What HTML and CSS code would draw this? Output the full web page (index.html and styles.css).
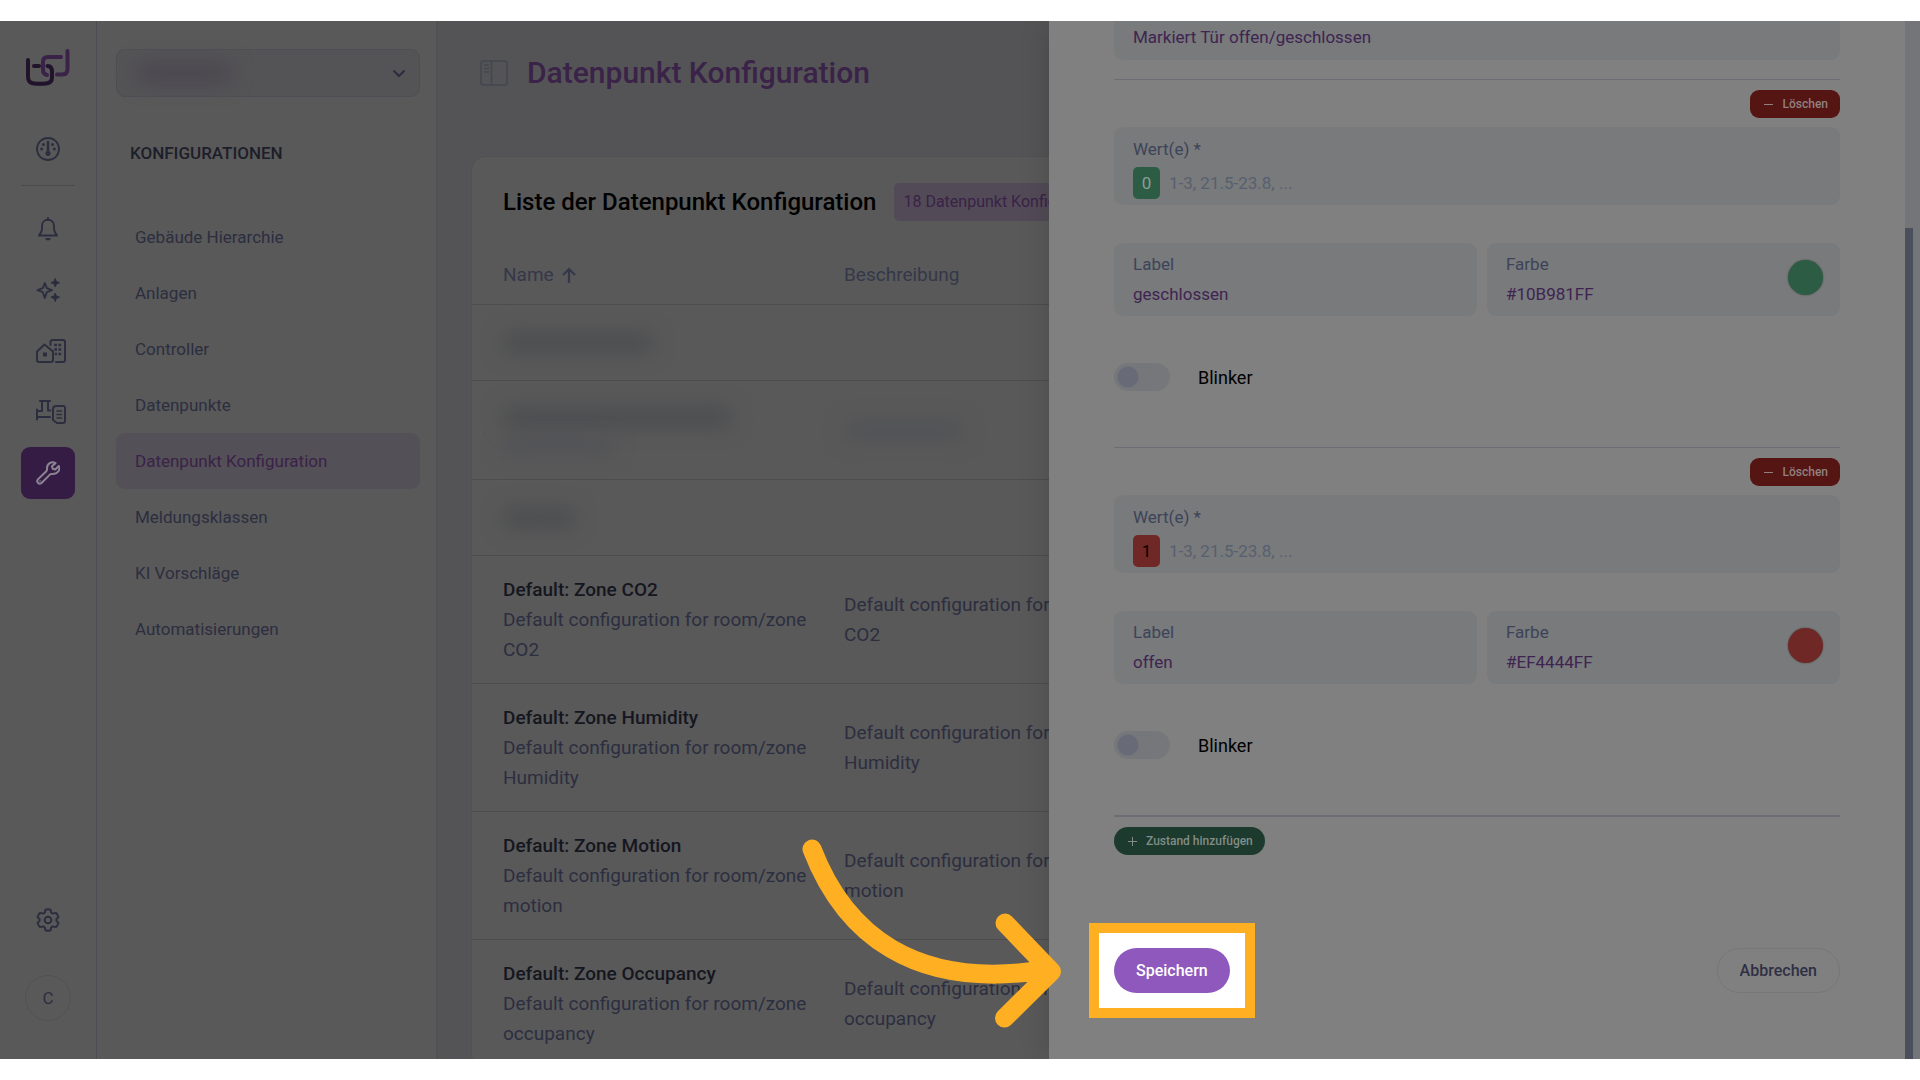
FILE: index.html
```
<!DOCTYPE html>
<html lang="de">
<head>
  <meta charset="UTF-8">
  <meta name="viewport" content="width=device-width, initial-scale=1.0">
  <title>Datenpunkt Konfiguration</title>
  <link rel="stylesheet" href="styles.css">
</head>
<body>
  <div class="app">

    <!-- Icon rail -->
    <nav class="rail" aria-label="Hauptmenü">
      <a class="logo" href="#" aria-label="Startseite">
        <svg width="44" height="37" viewBox="0 0 44 37" fill="none" stroke-width="4" stroke-linecap="round">
          <path class="logo-light" d="M35 8H22q-5 0-5 5v8q0 4 4 5M31 25.500h5q5.500 0 5.500-5.500V2"/>
          <path class="logo-dark" d="M2 11v17q0 6 6 6.500q6 .500 12 0q6-.500 6-6V23q0-6-4.500-6M8 17h5"/>
        </svg>
      </a>
      <a class="rail-item" href="#" aria-label="Dashboard">
        <svg width="24" height="24" viewBox="0 0 24 24" fill="none" stroke="currentColor" stroke-width="1.800">
          <circle cx="12" cy="12" r="11"/>
          <path d="M12 5v10" stroke-width="2.500" stroke-linecap="round"/>
          <g fill="currentColor" stroke="none">
            <circle cx="12" cy="16.500" r="2.500"/>
            <circle cx="7.500" cy="7.500" r="1.500"/>
            <circle cx="16.500" cy="7.500" r="1.500"/>
            <circle cx="5.600" cy="12" r="1.500"/>
            <circle cx="18.400" cy="12" r="1.500"/>
          </g>
        </svg>
      </a>
      <hr class="rail-line">
      <a class="rail-item" href="#" aria-label="Meldungen">
        <svg width="24" height="24" viewBox="0 0 24 24" fill="none" stroke="currentColor" stroke-width="1.900" stroke-linejoin="round" stroke-linecap="round">
          <path d="M12 1v2M12 2.800c-3.800 0-6 2.800-6 6v3.200c0 2.600-1.200 4-3 6.500h18c-1.800-2.500-3-3.900-3-6.500V8.800c0-3.200-2.200-6-6-6z"/>
          <path d="M9 21h6q-1 2.500-3 2.500t-3-2.500z" fill="currentColor" stroke="none"/>
        </svg>
      </a>
      <a class="rail-item" href="#" aria-label="KI">
        <svg width="24" height="24" viewBox="0 0 24 24" fill="none" stroke="currentColor" stroke-width="1.900" stroke-linejoin="round">
          <path d="M8.800 5l2 5.200 5.200 2-5.200 2-2 5.800-2-5.800-5.300-2 5.300-2z"/>
          <path d="M19.200.500l1.200 3 3.100 1.200-3.100 1.200-1.200 3-1.200-3-3.100-1.200 3.100-1.200zM19.200 15l1.200 3 3.100 1.200-3.100 1.200-1.200 3-1.200-3-3.100-1.200 3.100-1.200z" fill="currentColor" stroke-width="1"/>
        </svg>
      </a>
      <a class="rail-item wide" href="#" aria-label="Gebäude">
        <svg width="30" height="24" viewBox="0 0 30 24" fill="none" stroke="currentColor" stroke-width="2" stroke-linejoin="round" stroke-linecap="round">
          <path d="M1 12.500L8.500 5.500 17 12.500V21q0 2-2 2H3q-2 0-2-2z"/>
          <path d="M14.500 6V3q0-2 2-2H27q2 0 2 2v18q0 2-2 2h-7"/>
          <path d="M7 13.500h4v4H7zM18.200 4.700H21v2.600h-2.800zM22.400 4.700h2.800v2.600h-2.800zM18.200 9.200H21v2.600h-2.800zM22.400 9.200h2.800v2.600h-2.800zM18.800 13.700H21v2.600h-2.200zM22.400 13.700h2.800v2.600h-2.800z" fill="currentColor" stroke="none"/>
        </svg>
      </a>
      <a class="rail-item wide" href="#" aria-label="Anlagen">
        <svg width="30" height="24" viewBox="0 0 30 24" fill="none" stroke="currentColor" stroke-width="2" stroke-linejoin="round" stroke-linecap="round">
          <path d="M4 1h10M6 1v10H1M12 1v9.500h2.500M1 9.500v10M1 17h13"/>
          <path d="M20.500 6H27q2 0 2 2v13q0 2-2 2h-6l-4-3V9q0-3 3.500-3z"/>
          <path d="M21 11h4.500M21 14.500h4.500M21 18h4.500" stroke-width="1.500"/>
        </svg>
      </a>
      <a class="rail-item active" href="#" aria-label="Konfigurationen">
        <svg width="24" height="24" viewBox="0 0 24 24" fill="none" stroke="currentColor" stroke-width="2" stroke-linejoin="round" stroke-linecap="round">
          <path d="M19.500 2.200C16 .200 10.500 2 11 8.500q0 1-.700 1.700L1.900 18.400c-2 2.200 1 5.600 3.600 3.600l8.400-8.400q.700-.600 1.700-.600C22 13.500 24.500 8.500 22.800 5l-3.600 3.500-2.500-.700-.800-2.500z"/>
          <path d="M4 20h.100" stroke-width="1.500"/>
        </svg>
      </a>
      <div class="rail-bottom">
        <a class="rail-item" href="#" aria-label="Einstellungen">
          <svg width="24" height="24" viewBox="0 0 24 24" fill="none" stroke="currentColor" stroke-width="2" stroke-linejoin="round">
            <circle cx="12" cy="12" r="3.300"/>
            <path d="M9.500 1.800q2.500-1 5 0l.800 2.900 1.600.900 2.900-.700q2 1.600 2.600 4.200l-2 2.100v1.600l2 2.100q-.600 2.600-2.600 4.200l-2.900-.700-1.600.900-.800 2.900q-2.500 1-5 0l-.800-2.900-1.600-.900-2.900.700q-2-1.600-2.600-4.200l2-2.100v-1.600l-2-2.100q.600-2.600 2.600-4.200l2.900.700 1.600-.900z"/>
          </svg>
        </a>
        <button class="avatar" type="button">C</button>
      </div>
    </nav>

    <!-- Submenu -->
    <aside class="submenu">
      <div class="site-select">
        <select aria-label="Standort"><option></option></select>
        <span class="smudge smudge-site"></span>
        <svg width="14" height="9" viewBox="0 0 14 9" fill="none" stroke="currentColor" stroke-width="2.200"><path d="M1.500 1.500L7 7l5.500-5.500"/></svg>
      </div>
      <h2>KONFIGURATIONEN</h2>
      <a class="menu-item" href="#">Gebäude Hierarchie</a>
      <a class="menu-item" href="#">Anlagen</a>
      <a class="menu-item" href="#">Controller</a>
      <a class="menu-item" href="#">Datenpunkte</a>
      <a class="menu-item active" href="#">Datenpunkt Konfiguration</a>
      <a class="menu-item" href="#">Meldungsklassen</a>
      <a class="menu-item" href="#">KI Vorschläge</a>
      <a class="menu-item" href="#">Automatisierungen</a>
    </aside>

    <!-- List -->
    <main class="content">
      <header class="page-head">
        <svg width="28" height="26" viewBox="0 0 28 26" fill="none" stroke="currentColor" stroke-width="1.500">
          <rect x="1" y="1" width="26" height="24" rx="2.500"/>
          <path d="M11.500 1v24M4 5h5M4 8.500h5M4 12h5"/>
        </svg>
        <h1>Datenpunkt Konfiguration</h1>
      </header>
      <section class="card">
        <div class="card-head">
          <h2>Liste der Datenpunkt Konfiguration</h2>
          <span class="count">18 Datenpunkt Konfigurationen</span>
        </div>
        <table>
          <thead>
            <tr>
              <th class="col-name">Name <svg width="14" height="16" viewBox="0 0 14 16" fill="none" stroke="currentColor" stroke-width="2.200"><path d="M7 16V2M1 8l6-6 6 6"/></svg></th>
              <th class="col-text">Beschreibung</th>
              <th></th>
            </tr>
          </thead>
          <tbody>
            <tr class="short">
              <td><span class="smudge smudge-a"></span></td>
              <td></td>
              <td></td>
            </tr>
            <tr class="medium">
              <td><span class="smudge smudge-b"></span><span class="smudge smudge-c"></span></td>
              <td><span class="smudge smudge-d"></span></td>
              <td></td>
            </tr>
            <tr class="short">
              <td><span class="smudge smudge-e"></span></td>
              <td></td>
              <td></td>
            </tr>
            <tr>
              <td><strong>Default: Zone CO2</strong>Default configuration for room/zone CO2</td>
              <td>Default configuration for CO2</td>
              <td></td>
            </tr>
            <tr>
              <td><strong>Default: Zone Humidity</strong>Default configuration for room/zone Humidity</td>
              <td>Default configuration for Humidity</td>
              <td></td>
            </tr>
            <tr>
              <td><strong>Default: Zone Motion</strong>Default configuration for room/zone motion</td>
              <td>Default configuration for motion</td>
              <td></td>
            </tr>
            <tr>
              <td><strong>Default: Zone Occupancy</strong>Default configuration for room/zone occupancy</td>
              <td>Default configuration for occupancy</td>
              <td></td>
            </tr>
          </tbody>
        </table>
      </section>
    </main>

    <!-- Edit drawer -->
    <form class="drawer">
      <div class="drawer-body">
        <div class="field field-cut">
          <input type="text" aria-label="Beschreibung" value="Markiert Tür offen/geschlossen">
        </div>

        <section class="state">
          <button class="btn-delete" type="button">
            <svg width="9" height="9" viewBox="0 0 9 9" stroke="currentColor"><path d="M0 4.500h9"/></svg>Löschen
          </button>
          <div class="field field-values">
            <label for="values0">Wert(e) *</label>
            <div class="chips">
              <span class="chip green">0</span>
              <input id="values0" type="text" placeholder="1-3, 21.5-23.8, ...">
            </div>
          </div>
          <div class="pair">
            <div class="field">
              <label for="label0">Label</label>
              <input id="label0" type="text" value="geschlossen">
            </div>
            <div class="field field-color">
              <div>
                <label for="color0">Farbe</label>
                <input id="color0" type="text" value="#10B981FF">
              </div>
              <span class="swatch green"></span>
            </div>
          </div>
          <label class="toggle"><input type="checkbox">Blinker</label>
        </section>

        <section class="state">
          <button class="btn-delete" type="button">
            <svg width="9" height="9" viewBox="0 0 9 9" stroke="currentColor"><path d="M0 4.500h9"/></svg>Löschen
          </button>
          <div class="field field-values">
            <label for="values1">Wert(e) *</label>
            <div class="chips">
              <span class="chip red">1</span>
              <input id="values1" type="text" placeholder="1-3, 21.5-23.8, ...">
            </div>
          </div>
          <div class="pair">
            <div class="field">
              <label for="label1">Label</label>
              <input id="label1" type="text" value="offen">
            </div>
            <div class="field field-color">
              <div>
                <label for="color1">Farbe</label>
                <input id="color1" type="text" value="#EF4444FF">
              </div>
              <span class="swatch red"></span>
            </div>
          </div>
          <label class="toggle"><input type="checkbox">Blinker</label>
        </section>

        <div class="add-row">
          <button class="btn-add" type="button">
            <svg width="9" height="9" viewBox="0 0 9 9" stroke="currentColor"><path d="M0 4.500h9M4.500 0v9"/></svg>Zustand hinzufügen
          </button>
        </div>

        <footer class="actions">
          <div class="spotlight">
            <button class="btn-save" type="submit">Speichern</button>
            <!-- Pointer arrow, ends at the left edge of the frame -->
            <svg class="arrow" width="262" height="192" viewBox="0 0 262 192" fill="none">
              <path d="M12 11C45 97 115 151 240 132.500M205 85l46.500 48.500-47 46.500"/>
            </svg>
          </div>
          <button class="btn-cancel" type="button">Abbrechen</button>
        </footer>
      </div>
      <div class="scrollbar"><div class="thumb"></div></div>
    </form>

  </div>
</body>
</html>
```

FILE: styles.css
```
* {
  box-sizing: border-box;
}
body {
  margin: 0;
  padding: 21px 0;
  height: 100vh;
  background: #fff;
  font-family: Roboto, "Liberation Sans", sans-serif;
  font-size: 17px;
  color: #2c2e40;
}
a {
  color: inherit;
  text-decoration: none;
}
h1, h2 {
  margin: 0;
  font-weight: 500;
}
button, input, select {
  font: inherit;
  color: inherit;
  border: 0;
}
svg {
  display: block;
  flex: none;
}
.app {
  position: relative;
  display: flex;
  height: 100%;
  overflow: hidden;
  background: #545456;
}

/* rail */
.rail {
  display: flex;
  flex-direction: column;
  align-items: center;
  gap: 9px;
  width: 97px;
  padding: 28px 0 38px;
  background: #595959;
  border-right: 1px solid #4d4c54;
}
.logo {
  margin-bottom: 28px;
}
.logo-light {
  stroke: #3a2248;
}
.logo-dark {
  stroke: #22132c;
}
.rail-item {
  display: flex;
  align-items: center;
  justify-content: center;
  width: 54px;
  height: 52px;
  border-radius: 9px;
  flex: none;
}
.rail-item.wide {
  padding-left: 6px;
}
.rail-item.active {
  background: #341c45;
  color: #8d8491;
}
.rail-line {
  width: 54px;
  margin: 1px 0 8px;
  border: 0;
  border-top: 1px solid #4b4b4e;
}
.rail-bottom {
  display: flex;
  flex-direction: column;
  align-items: center;
  gap: 29px;
  margin-top: auto;
}
.avatar {
  width: 46px;
  height: 46px;
  padding: 0;
  border: 1px solid #525252;
  border-radius: 50%;
  background: none;
}

/* submenu */
.submenu {
  width: 340px;
  padding: 28px 16px 0 19px;
  background: #595959;
  border-right: 1px solid #4f4f54;
  flex: none;
}
.site-select {
  position: relative;
  display: flex;
  align-items: center;
}
.site-select select {
  width: 100%;
  height: 48px;
  appearance: none;
  background: #545456;
  border: 1px solid #4e4f54;
  border-radius: 9px;
}
.site-select svg {
  position: absolute;
  right: 14px;
}
.submenu h2 {
  margin: 43px 0 43px 14px;
  line-height: 26px;
  font-size: 17px;
  color: #1d1e29;
}
.menu-item {
  display: block;
  padding: 0 19px;
  line-height: 56px;
  border-radius: 9px;
}
.menu-item.active {
  background: #545057;
  color: #3a2248;
}

/* list */
.content {
  flex: 1;
  min-width: 0;
  padding: 30px 0 0 34px;
}
.page-head {
  display: flex;
  align-items: center;
  gap: 19px;
  margin-bottom: 61px;
  padding-left: 9px;
  color: #42464f;
}
.page-head h1 {
  font-size: 30px;
  line-height: 44px;
  color: #3a2248;
}
.card {
  background: #595959;
  border: 1px solid #515154;
  border-radius: 14px;
}
.card-head {
  display: flex;
  align-items: center;
  gap: 18px;
  padding: 26px 31px 25px;
  white-space: nowrap;
}
.card-head h2 {
  font-size: 24px;
  line-height: 38px;
  color: #000;
}
.count {
  padding: 0 9px;
  line-height: 38px;
  border-radius: 5px;
  background: #524b57;
  color: #3a2248;
  font-size: 16px;
}
table {
  width: 100%;
  table-layout: fixed;
  border-collapse: collapse;
  font-size: 19px;
  line-height: 30px;
}
th, td {
  padding: 19px 0 18px 31px;
  text-align: left;
  font-weight: 400;
  border-bottom: 1px solid #4d4d4e;
}
th {
  height: 58px;
  padding-top: 14px;
  padding-bottom: 13px;
  color: #34384a;
}
.col-name {
  width: 341px;
}
.col-text {
  width: 270px;
}
th svg {
  display: inline-block;
  margin-left: 4px;
  vertical-align: -2px;
}
td strong {
  display: block;
  font-weight: 500;
  color: #15161f;
}
.short {
  height: 76px;
}
.medium {
  height: 99px;
}

/* blurred out customer names */
.smudge {
  display: block;
  height: 20px;
  border-radius: 8px;
  background: #4c4d50;
  filter: blur(10px);
}
.smudge-site {
  position: absolute;
  left: 20px;
  width: 96px;
  background: #4b4650;
}
.smudge-a {
  width: 150px;
}
.smudge-b {
  width: 228px;
}
.smudge-c {
  width: 110px;
  height: 14px;
  margin-top: 12px;
  background: #505156;
}
.smudge-d {
  width: 120px;
  height: 16px;
  background: #505156;
}
.smudge-e {
  width: 72px;
}

/* drawer */
.drawer {
  position: absolute;
  top: 0;
  right: 0;
  bottom: 0;
  display: flex;
  width: 871px;
  background: #808080;
  box-shadow: 0 0 28px rgba(0, 0, 0, 0.16);
}
.drawer-body {
  flex: 1;
  min-width: 0;
  padding: 0 65px;
}
.scrollbar {
  width: 15px;
  padding-top: 207px;
  background: #747579;
}
.thumb {
  width: 8px;
  height: 100%;
  background: #4b4f5b;
}
.field {
  padding: 6px 17px 7px 19px;
  line-height: 30px;
  background: #787a7b;
  border-radius: 9px;
}
.field label {
  display: block;
  color: #3d435a;
}
.field input {
  display: block;
  width: 100%;
  height: 30px;
  padding: 0;
  background: none;
  color: #3f2452;
}
.field input::placeholder {
  color: #57606f;
  opacity: 1;
}
.field-cut {
  margin-bottom: 19px;
  padding-top: 1px;
  padding-bottom: 8px;
  border-radius: 0 0 9px 9px;
}
.state {
  padding: 10px 0 56px;
  border-top: 1px solid #6b6c76;
}
.btn-delete, .btn-add {
  display: flex;
  align-items: center;
  gap: 9px;
  height: 28px;
  padding: 0 12px 0 14px;
  border-radius: 9px;
  font-size: 12px;
  font-weight: 500;
}
.btn-delete {
  margin: 0 0 9px auto;
  background: #541513;
  color: #918080;
}
.btn-add {
  border-radius: 14px;
  background: #1c3a2d;
  color: #818d87;
}
.field-values {
  margin-bottom: 38px;
  padding-top: 7px;
  padding-bottom: 6px;
}
.chips {
  display: flex;
  align-items: center;
  gap: 9px;
  margin-top: 3px;
}
.chip {
  width: 27px;
  flex: none;
  line-height: 32px;
  text-align: center;
  border-radius: 5px;
  color: #000;
}
.chip.green {
  color: #8d9d95;
}
.green {
  background: #2c5c44;
}
.red {
  background: #6f2826;
}
.pair {
  display: grid;
  grid-template-columns: 363fr 353fr;
  gap: 10px;
  margin-bottom: 47px;
}
.field-color {
  display: flex;
  justify-content: space-between;
}
.swatch {
  width: 35px;
  height: 35px;
  margin-top: 11px;
  border-radius: 50%;
  box-shadow: 0 0 2px rgba(0, 0, 0, 0.4);
}
.toggle {
  display: flex;
  align-items: center;
  gap: 28px;
  height: 28px;
  font-size: 18px;
  color: #000;
}
.toggle input {
  appearance: none;
  width: 56px;
  height: 28px;
  margin: 0;
  border-radius: 14px;
  background: radial-gradient(circle at 14px 14px, #686b77 10px, #76777a 11px);
}
.add-row {
  padding-top: 10px;
  border-top: 2px solid #6b6c76;
}
.actions {
  display: flex;
  align-items: center;
  justify-content: space-between;
  margin: 68px 0 0 -25px;
}
.spotlight {
  position: relative;
  padding: 15px;
  background: #fff;
  border: 10px solid #feaf22;
}
.btn-save, .btn-cancel {
  display: block;
  height: 45px;
  padding: 0 22px;
  border-radius: 23px;
  font-size: 16px;
  font-weight: 500;
}
.btn-save {
  background: #8f58bd;
  color: #fff;
}
.btn-cancel {
  background: none;
  border: 1px solid #777779;
  color: #2f3044;
}
.arrow {
  position: absolute;
  right: calc(100% + 37px);
  bottom: -22px;
}
.arrow path {
  stroke: #feaf22;
  stroke-width: 19px;
  stroke-linecap: round;
  stroke-linejoin: round;
}
```
